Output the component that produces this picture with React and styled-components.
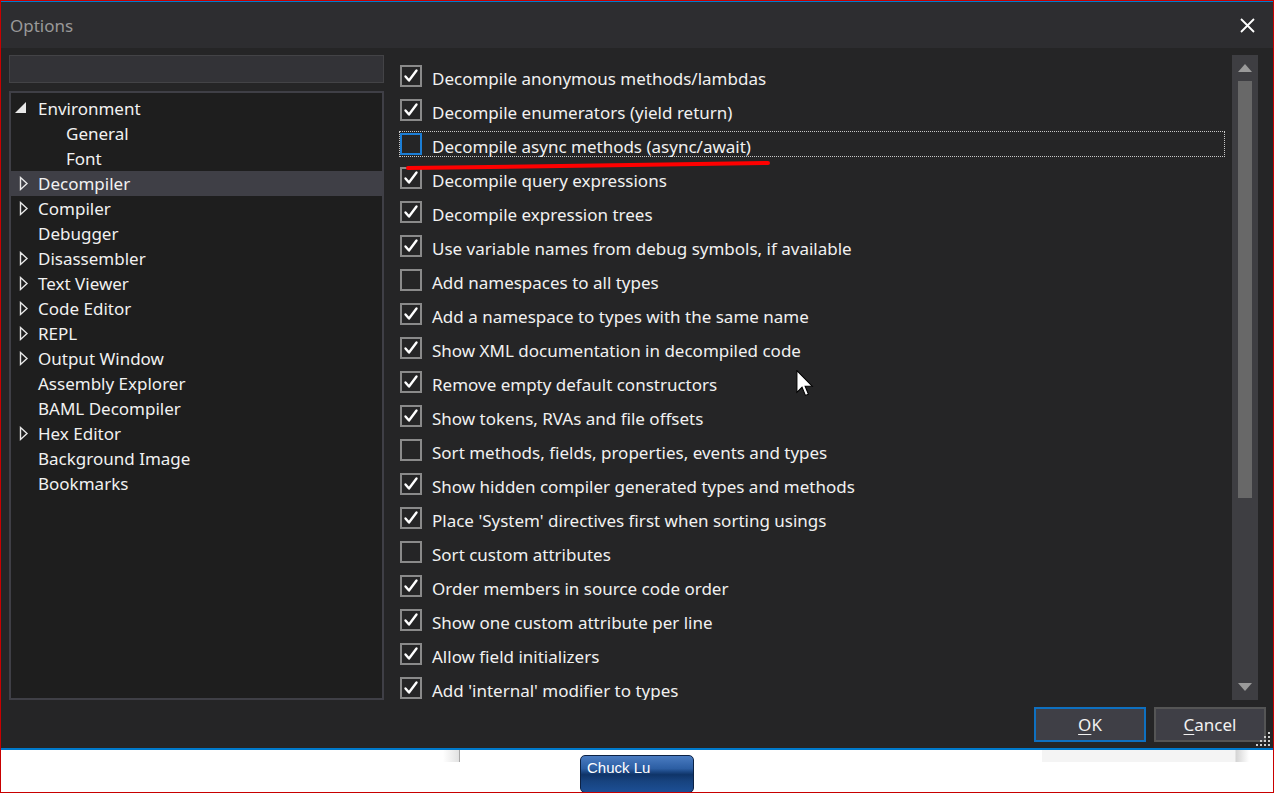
import React from 'react';
import styled, { createGlobalStyle } from 'styled-components';

const GlobalStyle = createGlobalStyle`
  html, body { margin: 0; padding: 0; background: #ffffff; }
  body { font-family: "Noto Sans", "Open Sans", sans-serif; }
  * { box-sizing: border-box; }
`;

const Frame = styled.div`
  width: 1274px;
  height: 793px;
  border: 1px solid #c80000;
  display: flex;
  flex-direction: column;
  overflow: hidden;
  background: #ffffff;
`;

const TopAccent = styled.div`
  flex: none;
  height: 1px;
  background: #007acc;
`;

const TitleBar = styled.div`
  flex: none;
  height: 46px;
  background: #2d2d30;
  display: flex;
  align-items: center;
  justify-content: space-between;
  padding: 0 18px 0 9px;
`;

const Title = styled.div`
  color: #999999;
  font-size: 17px;
`;

const Body = styled.div`
  flex: none;
  height: 700px;
  background: #252526;
  display: grid;
  grid-template-columns: 375px 1fr;
  grid-template-rows: 645px 35px;
  column-gap: 15px;
  row-gap: 7px;
  padding: 7px 7px 5px 8px;
  position: relative;
`;

const LeftColumn = styled.div`
  display: flex;
  flex-direction: column;
  gap: 8px;
  min-height: 0;
`;

const SearchBox = styled.div`
  height: 28px;
  background: #333337;
  border: 1px solid #434346;
`;

const Tree = styled.div`
  flex: 1;
  background: #1e1e1e;
  border: 2px solid #3f3f46;
  padding-top: 3px;
`;

const TreeRow = styled.div`
  height: 25px;
  display: flex;
  align-items: center;
  background: ${p => (p.$selected ? '#3f3f46' : 'transparent')};
  color: #f1f1f1;
  font-size: 17px;
  padding-left: ${p => p.$level * 28}px;
`;

const Expander = styled.svg`
  flex: none;
  width: 27px;
  height: 25px;
`;

const RightColumn = styled.div`
  display: flex;
  gap: 7px;
  margin-right: 8px;
  min-height: 0;
`;

const List = styled.div`
  flex: 1;
  padding-top: 4px;
  display: flex;
  flex-direction: column;
  overflow: hidden;
`;

const OptionRow = styled.div`
  flex: none;
  height: 26px;
  margin: 4px 0;
  display: flex;
  align-items: center;
  border: 1px dotted ${p => (p.$focused ? '#c8c8c8' : 'transparent')};
`;

const Box = styled.div`
  flex: none;
  width: 22px;
  height: 22px;
  margin-top: -1px;
  border: 2px solid ${p => (p.$focused ? '#1c7ed6' : '#8a8a8a')};
  display: flex;
  align-items: center;
  justify-content: center;
`;

const Label = styled.span`
  margin-left: 10px;
  margin-top: 4px;
  color: #f1f1f1;
  font-size: 17px;
  white-space: nowrap;
`;

const ScrollBar = styled.div`
  flex: none;
  width: 26px;
  background: #3e3e42;
  display: flex;
  flex-direction: column;
  align-items: center;
`;

const ArrowBtn = styled.div`
  flex: none;
  height: 26px;
  width: 100%;
  display: flex;
  align-items: center;
  justify-content: center;
`;

const Track = styled.div`
  flex: 1;
  width: 14px;
`;

const Thumb = styled.div`
  width: 14px;
  height: 417px;
  background: #686868;
`;

const ButtonRow = styled.div`
  grid-column: 1 / span 2;
  display: flex;
  justify-content: flex-end;
  gap: 8px;
`;

const DialogButton = styled.button`
  width: 112px;
  height: 35px;
  background: #3f3f46;
  border: 2px solid ${p => (p.$primary ? '#0e70c0' : '#555555')};
  color: #f1f1f1;
  font-family: "Noto Sans", "Open Sans", sans-serif;
  font-size: 17px;
  padding: 0;
  u { text-decoration: underline; text-underline-offset: 3px; }
`;

const Grip = styled.svg`
  position: absolute;
  right: 2px;
  bottom: 1px;
`;

const Cursor = styled.svg`
  position: absolute;
  left: 794px;
  top: 322px;
`;

const Annotation = styled.svg`
  position: absolute;
  left: 400px;
  top: 108px;
`;

const BlueLine = styled.div`
  flex: none;
  height: 2px;
  background: #007acc;
`;

const Footer = styled.div`
  flex: 1;
  background: #ffffff;
  display: flex;
  align-items: flex-start;
`;

const LeftStrip = styled.div`
  width: 459px;
  height: 12px;
  background: linear-gradient(to right, #ffffff 0, #ffffff 442px, #e2e2e2 458px);
  border-right: 1px solid #a8a8a8;
`;

const ChuckButton = styled.div`
  margin-left: 120px;
  margin-top: 5px;
  width: 114px;
  height: 38px;
  border: 1px solid #0d2244;
  border-radius: 5px;
  background: linear-gradient(
    to bottom,
    #4a7cc2 0%,
    #2c5ea3 35%,
    #163f78 47%,
    #0f3468 52%,
    #17437f 70%,
    #1c4f95 100%
  );
  color: #ffffff;
  font-family: "Liberation Sans", Arial, sans-serif;
  font-size: 15px;
  line-height: 20px;
  padding: 2px 0 0 6px;
`;

const RightStrip = styled.div`
  margin-left: auto;
  margin-right: 24px;
  width: 207px;
  height: 12px;
  background: linear-gradient(to right, #f4f4f4 0, #f4f4f4 193px, #d4d4d4 194px, #ffffff 207px);
`;

const treeItems = [
  { label: 'Environment', level: 0, exp: 'open' },
  { label: 'General', level: 1 },
  { label: 'Font', level: 1 },
  { label: 'Decompiler', level: 0, exp: 'closed', selected: true },
  { label: 'Compiler', level: 0, exp: 'closed' },
  { label: 'Debugger', level: 0 },
  { label: 'Disassembler', level: 0, exp: 'closed' },
  { label: 'Text Viewer', level: 0, exp: 'closed' },
  { label: 'Code Editor', level: 0, exp: 'closed' },
  { label: 'REPL', level: 0, exp: 'closed' },
  { label: 'Output Window', level: 0, exp: 'closed' },
  { label: 'Assembly Explorer', level: 0 },
  { label: 'BAML Decompiler', level: 0 },
  { label: 'Hex Editor', level: 0, exp: 'closed' },
  { label: 'Background Image', level: 0 },
  { label: 'Bookmarks', level: 0 },
];

const options = [
  ['Decompile anonymous methods/lambdas', true],
  ['Decompile enumerators (yield return)', true],
  ['Decompile async methods (async/await)', false, true],
  ['Decompile query expressions', true],
  ['Decompile expression trees', true],
  ['Use variable names from debug symbols, if available', true],
  ['Add namespaces to all types', false],
  ['Add a namespace to types with the same name', true],
  ['Show XML documentation in decompiled code', true],
  ['Remove empty default constructors', true],
  ['Show tokens, RVAs and file offsets', true],
  ['Sort methods, fields, properties, events and types', false],
  ['Show hidden compiler generated types and methods', true],
  ["Place 'System' directives first when sorting usings", true],
  ['Sort custom attributes', false],
  ['Order members in source code order', true],
  ['Show one custom attribute per line', true],
  ['Allow field initializers', true],
  ["Add 'internal' modifier to types", true],
];

function ExpanderIcon({ type }) {
  return (
    <Expander viewBox="0 0 27 25">
      {type === 'open' && <path d="M4 17 L15 6 L15 17 Z" fill="#e8e8e8" />}
      {type === 'closed' && (
        <path d="M9.5 6.5 L16 12.5 L9.5 18.5 Z" fill="none" stroke="#e8e8e8" strokeWidth="1.4" strokeLinejoin="miter" />
      )}
    </Expander>
  );
}

function Check() {
  return (
    <svg width="18" height="18" viewBox="0 0 18 18">
      <path d="M3.5 9.5 L7 13.5 L14.5 3.5" fill="none" stroke="#ffffff" strokeWidth="2.4" strokeLinecap="round" strokeLinejoin="round" />
    </svg>
  );
}

export default function App() {
  return (
    <>
      <GlobalStyle />
      <Frame>
        <TopAccent />
        <TitleBar>
          <Title>Options</Title>
          <svg width="15" height="15" viewBox="0 0 15 15">
            <path d="M1 1 L14 14 M14 1 L1 14" stroke="#ffffff" strokeWidth="1.8" />
          </svg>
        </TitleBar>
        <Body>
          <LeftColumn>
            <SearchBox />
            <Tree>
              {treeItems.map(item => (
                <TreeRow key={item.label} $level={item.level} $selected={item.selected}>
                  <ExpanderIcon type={item.exp} />
                  {item.label}
                </TreeRow>
              ))}
            </Tree>
          </LeftColumn>
          <RightColumn>
            <List>
              {options.map(([text, checked, focused]) => (
                <OptionRow key={text} $focused={focused}>
                  <Box $focused={focused}>{checked && <Check />}</Box>
                  <Label>{text}</Label>
                </OptionRow>
              ))}
            </List>
            <ScrollBar>
              <ArrowBtn>
                <svg width="14" height="8" viewBox="0 0 14 8">
                  <path d="M0 8 L7 0 L14 8 Z" fill="#9a9a9a" />
                </svg>
              </ArrowBtn>
              <Track>
                <Thumb />
              </Track>
              <ArrowBtn>
                <svg width="14" height="8" viewBox="0 0 14 8">
                  <path d="M0 0 L7 8 L14 0 Z" fill="#9a9a9a" />
                </svg>
              </ArrowBtn>
            </ScrollBar>
          </RightColumn>
          <ButtonRow>
            <DialogButton $primary>
              <u>O</u>K
            </DialogButton>
            <DialogButton>
              <u>C</u>ancel
            </DialogButton>
          </ButtonRow>
          <Annotation width="380" height="16" viewBox="0 0 380 16">
            <path d="M7 12 C 100 10.5, 250 9, 367 7" fill="none" stroke="#ff0000" strokeWidth="4" strokeLinecap="round" />
          </Annotation>
          <Cursor width="20" height="27" viewBox="0 0 13 20">
            <path d="M0.5 0.5 V16.5 L4.3 12.8 L6.8 18.8 L9 17.9 L6.6 12 H11.8 Z" fill="#ffffff" stroke="#000000" strokeWidth="0.8" />
          </Cursor>
          <Grip width="18" height="18" viewBox="0 0 18 18">
            {[
              [15, 3], [11, 7], [15, 7], [7, 11], [11, 11], [15, 11], [3, 15], [7, 15], [11, 15], [15, 15],
            ].map(([x, y]) => (
              <rect key={`${x}-${y}`} x={x} y={y} width="2" height="2" fill="#cfcfcf" />
            ))}
          </Grip>
        </Body>
        <BlueLine />
        <Footer>
          <LeftStrip />
          <ChuckButton>Chuck Lu</ChuckButton>
          <RightStrip />
        </Footer>
      </Frame>
    </>
  );
}
